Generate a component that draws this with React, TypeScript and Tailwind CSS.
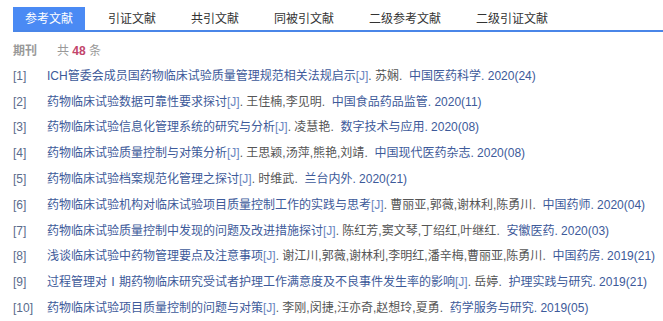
import React from 'react'

const tabs = ['参考文献', '引证文献', '共引文献', '同被引文献', '二级参考文献', '二级引证文献']

const refs = [
  { title: 'ICH管委会成员国药物临床试验质量管理规范相关法规启示', authors: '苏娴', journal: '中国医药科学', year: '2020(24)' },
  { title: '药物临床试验数据可靠性要求探讨', authors: '王佳楠,李见明', journal: '中国食品药品监管', year: '2020(11)' },
  { title: '药物临床试验信息化管理系统的研究与分析', authors: '凌慧艳', journal: '数字技术与应用', year: '2020(08)' },
  { title: '药物临床试验质量控制与对策分析', authors: '王思颖,汤萍,熊艳,刘靖', journal: '中国现代医药杂志', year: '2020(08)' },
  { title: '药物临床试验档案规范化管理之探讨', authors: '时维武', journal: '兰台内外', year: '2020(21)' },
  { title: '药物临床试验机构对临床试验项目质量控制工作的实践与思考', authors: '曹丽亚,郭薇,谢林利,陈勇川', journal: '中国药师', year: '2020(04)' },
  { title: '药物临床试验质量控制中发现的问题及改进措施探讨', authors: '陈红芳,窦文琴,丁绍红,叶继红', journal: '安徽医药', year: '2020(03)' },
  { title: '浅谈临床试验中药物管理要点及注意事项', authors: '谢江川,郭薇,谢林利,李明红,潘辛梅,曹丽亚,陈勇川', journal: '中国药房', year: '2019(21)' },
  { title: '过程管理对Ⅰ期药物临床研究受试者护理工作满意度及不良事件发生率的影响', authors: '岳婷', journal: '护理实践与研究', year: '2019(21)' },
  { title: '药物临床试验项目质量控制的问题与对策', authors: '李刚,闵捷,汪亦奇,赵想玲,夏勇', journal: '药学服务与研究', year: '2019(05)' },
]

export default function App() {
  return (
    <div
      className="w-[663px] h-[321px] bg-white pt-2 text-[12px] text-[#555]"
      style={{ fontFamily: '"Liberation Sans", Arial, "Noto Sans CJK SC", sans-serif' }}
    >
      {/* Tabs */}
      <div className="ml-[13px] flex items-end gap-[11px] border-b-2 border-[#4a86e8] h-[24px]">
        {tabs.map((t, i) => (
          <div
            key={t}
            className={
              i === 0
                ? 'h-[23px] px-3 min-w-[72px] flex items-center justify-center bg-[#4a8af4] text-white'
                : 'h-[23px] px-3 min-w-[72px] flex items-center justify-center text-[#333]'
            }
          >
            {t}
          </div>
        ))}
      </div>

      {/* Count */}
      <div className="ml-[13px] mt-[10px] flex items-center h-[18px]">
        <span className="font-bold text-[#999]">期刊</span>
        <span className="ml-[20px] text-[#999]">
          共 <b className="text-[#c2456b]">48</b> 条
        </span>
      </div>

      {/* List */}
      <ul className="mt-[3px]">
        {refs.map((r, i) => (
          <li key={i} className="flex h-[25.8px] items-center pl-[13px] whitespace-nowrap">
            <span className="w-[34px] text-[#5a6b8c]">[{i + 1}]</span>
            <span className="text-[#3d5a9a]">{r.title}</span>
            <span className="text-[#6a86c0]">[J]</span>
            <span>. {r.authors}.&nbsp;&nbsp;</span>
            <span className="text-[#3d5a9a]">{r.journal}. {r.year}</span>
          </li>
        ))}
      </ul>
    </div>
  )
}
